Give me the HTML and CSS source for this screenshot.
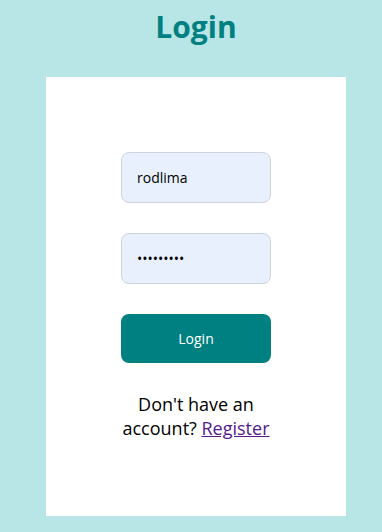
FILE: index.html
```html
<!DOCTYPE html>
<html lang="en">
<head>
  <meta charset="UTF-8">
  <meta name="viewport" content="width=device-width, initial-scale=1.0">
  <title>Login</title>
  <link rel="stylesheet" href="styles.css">
</head>
<body>
  <h1>Login</h1>
  <div class="container">
    <form id="login-form">
      <input type="text" id="username" name="username" value="rodlima">
      <input type="password" id="password" name="password" value="123456789">
      <button type="button" class="submit-button">Login</button>
      <p class="register">Don't have an account? <a href="#">Register</a></p>
    </form>
  </div>
</body>
</html>
```

FILE: styles.css
```css
body {
  font-family: 'Open Sans', sans-serif;
  background-color: #b8e5e5;
  margin: 0;
  padding: 0 0 0 10px;
  height: 532px;
  box-sizing: border-box;
}

h1 {
  text-align: center;
  font-size: 30px;
  color: #008080;
  margin: 0;
  padding-top: 6px;
  height: 71px;
  line-height: 42px;
}

.container {
  background-color: #fff;
  width: 300px;
  height: 439px;
  margin: 0 auto;
  padding-top: 75px;
  box-sizing: border-box;
}

form {
  width: 150px;
  margin: 0 auto;
  display: flex;
  flex-direction: column;
  gap: 30px;
}

input[type="text"],
input[type="password"] {
  width: 100%;
  height: 51px;
  box-sizing: border-box;
  padding: 0 15px;
  border: 1px solid #cfd3da;
  border-radius: 8px;
  background-color: #e8f0fe;
  font-family: 'Open Sans', sans-serif;
  font-size: 14px;
  color: #000;
}

.submit-button {
  width: 100%;
  height: 49px;
  background-color: #008080;
  color: #fff;
  border: none;
  border-radius: 8px;
  font-family: 'Open Sans', sans-serif;
  font-size: 14px;
  cursor: pointer;
}

.register {
  margin: -1px 0 0;
  text-align: center;
  font-size: 18px;
  line-height: 24px;
  color: #000;
}

.register a {
  color: #551a8b;
}
```
